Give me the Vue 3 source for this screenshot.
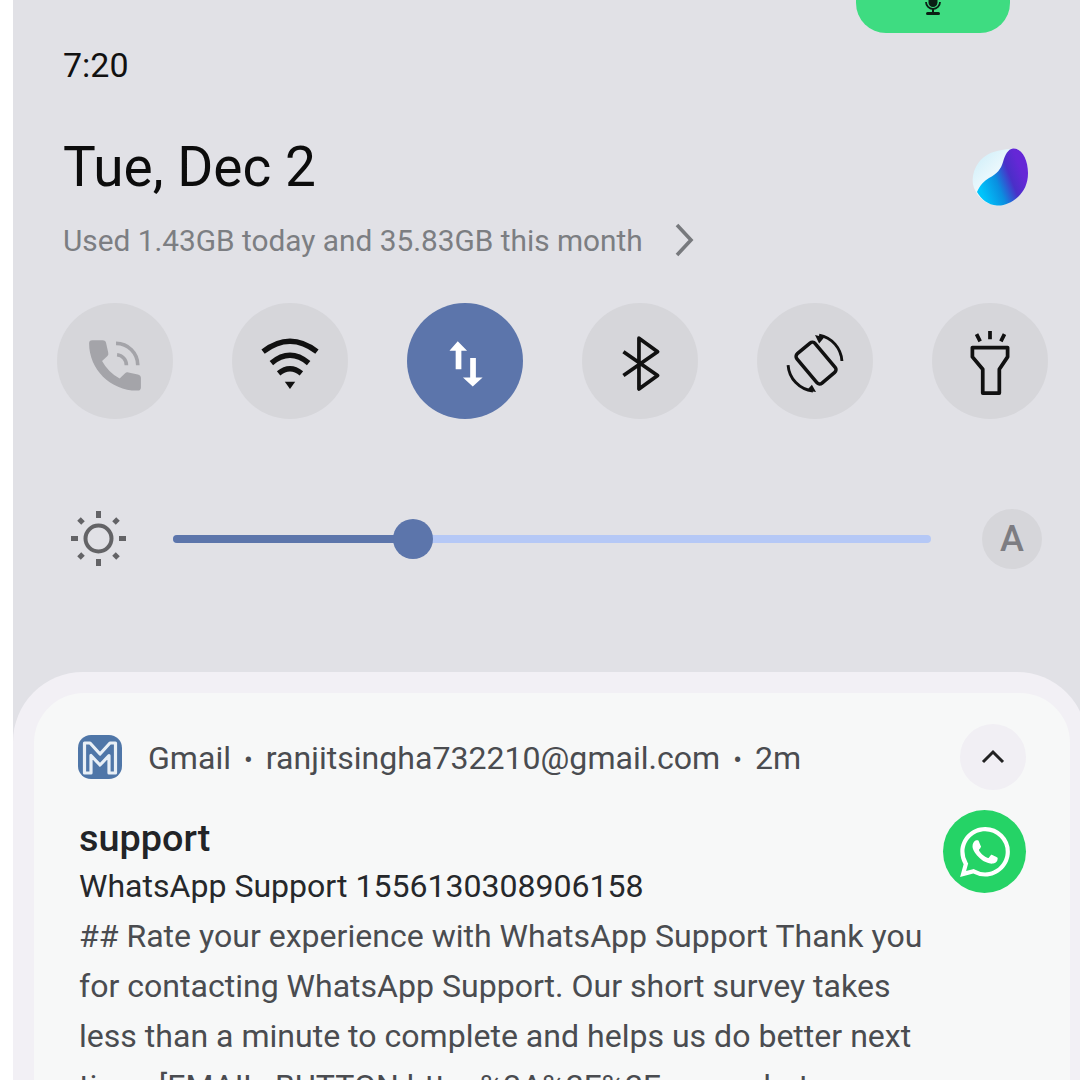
<script setup>
import { ref } from 'vue';

const brightness = ref(31.6);

const bodyLines = [
    '## Rate your experience with WhatsApp Support Thank you',
    'for contacting WhatsApp Support. Our short survey takes',
    'less than a minute to complete and helps us do better next',
    'time. [EMAIL_BUTTON https%3A%2F%2Fwww.whatsapp',
];
</script>

<template>
    <div class="screen">
        <div class="panel">
            <div class="call-pill">
                <svg class="mic" width="24" height="18" viewBox="0 0 24 18">
                    <rect x="7.500" y="-6" width="9" height="14" rx="4.500" fill="#0b1f14" />
                    <path d="M5 3a7 7 0 0 0 14 0" fill="none" stroke="#0b1f14" stroke-width="1.800" />
                    <path d="M12 10v4" stroke="#0b1f14" stroke-width="2" />
                    <rect x="5" y="13" width="14" height="3" rx="1.500" fill="#0b1f14" />
                </svg>
            </div>

            <div class="time">7:20</div>

            <div class="date-row">
                <div class="date">Tue, Dec 2</div>
                <svg class="blob" width="58" height="58" viewBox="0 0 58 58">
                    <defs>
                        <linearGradient id="blobPale" x1="0" y1="0" x2="1" y2="1">
                            <stop offset="0" stop-color="#c9ecf8" />
                            <stop offset="0.5" stop-color="#f2fbfe" />
                            <stop offset="1" stop-color="#bfe9f8" />
                        </linearGradient>
                        <linearGradient id="blobMain" x1="0.1" y1="0.8" x2="0.9" y2="0.45">
                            <stop offset="0" stop-color="#00c4fb" />
                            <stop offset="0.4" stop-color="#0a8fe0" />
                            <stop offset="0.72" stop-color="#4a2fc8" />
                            <stop offset="1" stop-color="#6527d6" />
                        </linearGradient>
                    </defs>
                    <path d="M41 0.500C50 0 56 12 56 25C56 36 52 43 46 49C39 55 32 58 25 57.500C15 57 6 50 2 40C-1 32 1 22 7 14C12 8 19 3.500 30 2C34 1.500 38 0.600 41 0.500Z" fill="url(#blobPale)" />
                    <path d="M41 0.500C50 0 56 12 56 25C56 36 52 43 46 49C39 55 32 58 25 57.500C16 57 9 51 5 44C8 37 12 33 17 30C25 26 29 21 31 14C33 7 36 1 41 0.500Z" fill="url(#blobMain)" />
                </svg>
            </div>

            <div class="usage">
                <span>Used 1.43GB today and 35.83GB this month</span>
                <svg width="22" height="36" viewBox="0 0 22 36">
                    <path d="M4 3l14 15L4 33" fill="none" stroke="#77797d" stroke-width="3.600" />
                </svg>
            </div>

            <div class="tiles">
                <div class="tile">
                    <svg width="116" height="116" viewBox="0 0 112 112">
                        <path d="M34 36h10q3 0 3.500 3l2 9q.5 2-1 3.500l-5 4.500q6 11 17 17l5-5q1.500-1.500 3.500-1l9 2q3 .5 3 3.500v9q0 3-3 3C52 85 31 64 31 39q0-3 3-3z" fill="#a4a4a9" />
                        <path d="M57 39A21 21 0 0 1 78 60M58 50A10 10 0 0 1 67 60" fill="none" stroke="#a4a4a9" stroke-width="3.500" />
                    </svg>
                </div>
                <div class="tile">
                    <svg width="116" height="116" viewBox="0 0 112 112">
                        <path d="M30 47Q56 27 82 47M38 58Q56 43 74 58M45 68Q56 59 67 68" fill="none" stroke="#111" stroke-width="5.200" />
                        <path d="M51 76H61L56 83Z" fill="#111" />
                    </svg>
                </div>
                <div class="tile tile-on">
                    <svg width="116" height="116" viewBox="0 0 112 112">
                        <path d="M49 37L58 46H52.500V64H47V46H41Z" fill="#fff" />
                        <path d="M61 53H66.500V72H73L63.500 80.500L54 72H61Z" fill="#fff" />
                    </svg>
                </div>
                <div class="tile">
                    <svg width="116" height="116" viewBox="0 0 112 112">
                        <path d="M40 47L73 70L55 83V34L73 47L40 70" fill="none" stroke="#111" stroke-width="3.600" stroke-linejoin="round" />
                    </svg>
                </div>
                <div class="tile">
                    <svg width="116" height="116" viewBox="0 0 112 112">
                        <rect x="45.500" y="39.500" width="23" height="37" rx="3.500" transform="rotate(-40 57 58)" fill="none" stroke="#111" stroke-width="3.400" />
                        <path d="M60 31A27 27 0 0 1 82 56M30 60A27 27 0 0 0 54 85" fill="none" stroke="#111" stroke-width="2.800" />
                        <path d="M56 31L65 33L60 39ZM57 86L48 84.500L53 79Z" fill="#111" />
                    </svg>
                </div>
                <div class="tile">
                    <svg width="116" height="116" viewBox="0 0 112 112">
                        <path d="M39 43H73V52L65 64V87H49V64L39 52Z" fill="none" stroke="#111" stroke-width="3.600" stroke-linejoin="round" />
                        <path d="M56 27V35M43 30L46.500 37M70 30L66.500 37" fill="none" stroke="#111" stroke-width="3.600" />
                    </svg>
                </div>
            </div>

            <div class="slider-row">
                <svg class="sun" width="58" height="58" viewBox="0 0 58 58">
                    <circle cx="28.500" cy="28.500" r="13" fill="none" stroke="#636366" stroke-width="4" />
                    <path d="M28.500 1V8M28.500 49V56M1 28.500H8M49 28.500H56" stroke="#636366" stroke-width="5" />
                    <path d="M9 9L13 13M44 44L48 48M48 9L44 13M13 44L9 48" stroke="#636366" stroke-width="5" />
                </svg>
                <div class="track">
                    <div class="track-fill" :style="{ width: brightness + '%' }"></div>
                    <div class="thumb" :style="{ left: brightness + '%' }"></div>
                </div>
                <div class="auto">A</div>
            </div>

            <div class="sheet">
                <div class="card">
                    <div class="card-head">
                        <svg class="app-icon" width="44" height="44" viewBox="0 0 44 44">
                            <rect width="44" height="44" rx="13" fill="#4f76a8" />
                            <path d="M6.500 38V8H12L22 19L32 8H37.500V38H31V20.500L22 30L13 20.500V38Z" fill="#4f76a8" stroke="#e8eff6" stroke-width="3.200" stroke-linejoin="round" />
                        </svg>
                        <div class="meta">Gmail<i>•</i>ranjitsingha732210@gmail.com<i>•</i>2m</div>
                        <div class="expand">
                            <svg width="24" height="16" viewBox="0 0 24 16">
                                <path d="M2 13L12 3L22 13" fill="none" stroke="#222" stroke-width="3" />
                            </svg>
                        </div>
                    </div>
                    <div class="card-body">
                        <div class="message">
                            <div class="sender">support</div>
                            <div class="subject">WhatsApp Support 1556130308906158</div>
                            <div v-for="line in bodyLines" :key="line" class="line">{{ line }}</div>
                        </div>
                        <div class="avatar">
                            <svg width="50" height="50" viewBox="0 0 24 24">
                                <path fill="#fff" d="M17.472 14.382c-.297-.149-1.758-.867-2.03-.967-.273-.099-.471-.148-.67.15-.197.297-.767.966-.94 1.164-.173.199-.347.223-.644.075-.297-.15-1.255-.463-2.39-1.475-.883-.788-1.48-1.761-1.653-2.059-.173-.297-.018-.458.13-.606.134-.133.298-.347.446-.52.149-.174.198-.298.298-.497.099-.198.05-.371-.025-.52-.075-.149-.669-1.612-.916-2.207-.242-.579-.487-.5-.669-.51-.173-.008-.371-.01-.57-.01-.198 0-.52.074-.792.372-.272.297-1.04 1.016-1.04 2.479 0 1.462 1.065 2.875 1.213 3.074.149.198 2.096 3.2 5.077 4.487.709.306 1.262.489 1.694.625.712.227 1.36.195 1.871.118.571-.085 1.758-.719 2.006-1.413.248-.694.248-1.289.173-1.413-.074-.124-.272-.198-.57-.347m-5.421 7.403h-.004a9.87 9.87 0 01-5.031-1.378l-.361-.214-3.741.982.998-3.648-.235-.374a9.86 9.86 0 01-1.51-5.26c.001-5.45 4.436-9.884 9.888-9.884 2.64 0 5.122 1.03 6.988 2.898a9.825 9.825 0 012.893 6.994c-.003 5.45-4.437 9.884-9.885 9.884m8.413-18.297A11.815 11.815 0 0012.05 0C5.495 0 .16 5.335.157 11.892c0 2.096.547 4.142 1.588 5.945L.057 24l6.305-1.654a11.882 11.882 0 005.683 1.448h.005c6.554 0 11.89-5.335 11.893-11.893a11.821 11.821 0 00-3.48-8.413z" />
                            </svg>
                        </div>
                    </div>
                </div>
            </div>
        </div>
    </div>
</template>

<style>
html,
body {
    margin: 0;
    background: #fff;
}
</style>

<style scoped>
.screen {
    width: 1080px;
    height: 1080px;
    overflow: hidden;
    padding-left: 13px;
    box-sizing: border-box;
    background: #fff;
    font-family: Roboto, "Liberation Sans", sans-serif;
}

.panel {
    position: relative;
    height: 1080px;
    background: #e1e1e6;
    padding-top: 45px;
    box-sizing: border-box;
}

.call-pill {
    position: absolute;
    top: -30px;
    left: 843px;
    width: 154px;
    height: 63px;
    border-radius: 30px;
    background: #3edc81;
    display: flex;
    justify-content: center;
    align-items: flex-end;
    padding-bottom: 16px;
    box-sizing: border-box;
}

.time {
    margin-left: 50px;
    font-size: 34px;
    line-height: 40px;
    color: #111;
}

.date-row {
    display: flex;
    align-items: center;
    justify-content: space-between;
    margin: 47px 50px 0;
    height: 70px;
}

.date {
    font-size: 55px;
    line-height: 70px;
    color: #0c0c0c;
}

.blob {
    margin-top: 20px;
}

.usage {
    display: flex;
    align-items: center;
    gap: 30px;
    margin: 18px 0 0 50px;
    height: 40px;
    font-size: 29.8px;
    color: #7c7e82;
}

.tiles {
    display: flex;
    gap: 59px;
    margin: 43px 0 0 43.5px;
}

.tile {
    width: 116px;
    height: 116px;
    flex: none;
    border-radius: 50%;
    background: #d6d6da;
}

.tile-on {
    background: #5c75ab;
}

.slider-row {
    display: flex;
    align-items: center;
    height: 60px;
    margin: 90px 0 0 57px;
}

.sun {
    flex: none;
}

.track {
    position: relative;
    width: 758px;
    height: 8px;
    flex: none;
    margin: 0 51px 0 45px;
    border-radius: 4px;
    background: #b5c8f6;
}

.track-fill {
    height: 100%;
    border-radius: 4px;
    background: #5c75ab;
}

.thumb {
    position: absolute;
    top: -16px;
    width: 40px;
    height: 40px;
    margin-left: -20px;
    border-radius: 50%;
    background: #5c75ab;
}

.auto {
    width: 60px;
    height: 60px;
    flex: none;
    border-radius: 50%;
    background: #d6d6da;
    display: flex;
    align-items: center;
    justify-content: center;
    font-size: 36px;
    font-weight: 500;
    color: #7d7d82;
}

.sheet {
    margin: 103px -7px 0 0;
    padding: 21px 17px 0 21px;
    height: 500px;
    border-radius: 70px 70px 0 0;
    background: #f2f0f5;
}

.card {
    height: 100%;
    border-radius: 50px 50px 0 0;
    background: #f7f8f8;
    padding: 31px 44px 0 45px;
    box-sizing: border-box;
}

.card-head {
    display: flex;
    align-items: center;
    height: 66px;
}

.app-icon {
    flex: none;
    margin-left: -1px;
}

.meta {
    flex: 1;
    margin-left: 26px;
    padding-top: 2px;
    font-size: 32.1px;
    color: #4a4c50;
    white-space: nowrap;
}

.meta i {
    font-style: normal;
    margin: 0 13px;
    font-size: 26px;
}

.expand {
    width: 66px;
    height: 66px;
    flex: none;
    border-radius: 50%;
    background: #f1eff4;
    display: flex;
    align-items: center;
    justify-content: center;
}

.card-body {
    display: flex;
    justify-content: space-between;
    margin-top: 20px;
}

.message {
    padding-top: 5px;
    font-size: 32.05px;
    line-height: 50px;
    color: #4a4c50;
    white-space: nowrap;
}

.sender {
    font-size: 37.8px;
    line-height: 46px;
    font-weight: 500;
    color: #222427;
}

.subject {
    color: #26282b;
}

.avatar {
    width: 83px;
    height: 83px;
    flex: none;
    border-radius: 50%;
    background: #25d366;
    display: flex;
    align-items: center;
    justify-content: center;
}
</style>
